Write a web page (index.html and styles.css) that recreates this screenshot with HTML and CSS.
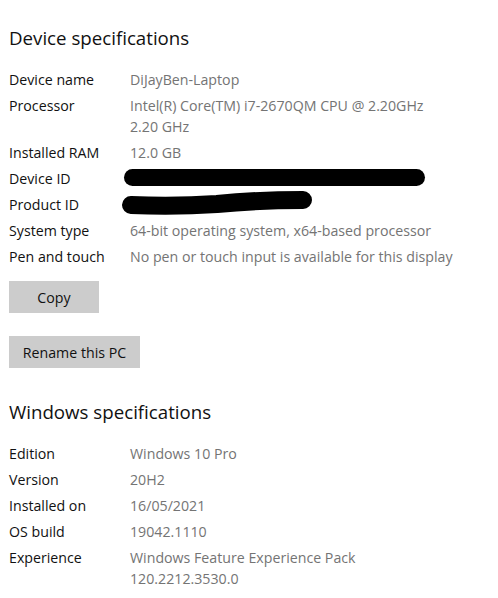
FILE: index.html
```html
<!DOCTYPE html>
<html>
<head>
<meta charset="utf-8">
<link rel="stylesheet" href="styles.css">
</head>
<body>
<main class="page">
  <h2 class="section-title first">Device specifications</h2>
  <dl class="specs">
    <dt>Device name</dt><dd>DiJayBen-Laptop</dd>
    <dt>Processor</dt><dd>Intel(R) Core(TM) i7-2670QM CPU @ 2.20GHz<br>2.20 GHz</dd>
    <dt>Installed RAM</dt><dd>12.0 GB</dd>
    <dt>Device ID</dt>
    <dd><svg class="redact" width="310" height="21" viewBox="0 0 310 21"><path d="M5.5 9.5 L289.5 9.5" stroke="#000" stroke-width="17" stroke-linecap="round" fill="none"/></svg></dd>
    <dt>Product ID</dt>
    <dd><svg class="redact" width="310" height="21" viewBox="0 0 310 21"><path d="M4 11 C30 12, 60 12, 90 10 C120 7, 150 6, 176 6" stroke="#000" stroke-width="18" stroke-linecap="round" fill="none"/></svg></dd>
    <dt>System type</dt><dd>64-bit operating system, x64-based processor</dd>
    <dt>Pen and touch</dt><dd>No pen or touch input is available for this display</dd>
  </dl>
  <div class="actions">
    <button class="btn btn-copy">Copy</button>
    <button class="btn btn-rename">Rename this PC</button>
  </div>
  <h2 class="section-title">Windows specifications</h2>
  <dl class="specs">
    <dt>Edition</dt><dd>Windows 10 Pro</dd>
    <dt>Version</dt><dd>20H2</dd>
    <dt>Installed on</dt><dd>16/05/2021</dd>
    <dt>OS build</dt><dd>19042.1110</dd>
    <dt>Experience</dt><dd>Windows Feature Experience Pack<br>120.2212.3530.0</dd>
  </dl>
</main>
</body>
</html>
```
FILE: styles.css
```css
html, body {
  margin: 0;
  padding: 0;
  background: #ffffff;
}
body {
  font-family: "Open Sans", "Liberation Sans", sans-serif;
  color: #111111;
}
.page {
  padding: 0 9px;
}
.section-title {
  margin: 30px 0 17px;
  font-size: 18.7px;
  line-height: 28px;
  font-weight: normal;
  color: #111111;
}
.section-title.first {
  margin-top: 24px;
}
.specs {
  display: grid;
  grid-template-columns: 121px 1fr;
  row-gap: 5px;
  margin: 0;
  font-size: 14.2px;
  line-height: 21px;
}
.specs dt {
  margin: 0;
  color: #111111;
}
.specs dd {
  margin: 0;
  color: #747474;
}
.redact {
  display: block;
  margin-left: -3px;
  overflow: visible;
}
.actions {
  display: flex;
  flex-direction: column;
  align-items: flex-start;
  gap: 23px;
  margin-top: 14px;
}
.btn {
  height: 32px;
  border: none;
  background: #cccccc;
  color: #111111;
  font-family: "Open Sans", "Liberation Sans", sans-serif;
  font-size: 14.2px;
  padding: 0;
}
.btn-copy {
  width: 90px;
}
.btn-rename {
  width: 131px;
}
```
